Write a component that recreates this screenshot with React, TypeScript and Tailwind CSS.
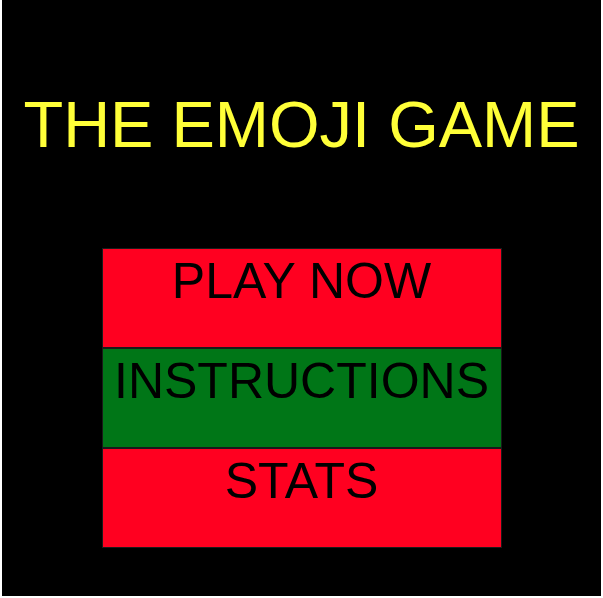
import React from 'react';

const menuItems = [
  { label: 'PLAY NOW', bg: 'bg-[#ff0020]' },
  { label: 'INSTRUCTIONS', bg: 'bg-[#007617]' },
  { label: 'STATS', bg: 'bg-[#ff0020]' },
];

const App: React.FC = () => {
  return (
    <div className="w-[603px] h-[598px] bg-white px-[2px] pb-[2px]" style={{ fontFamily: '"Liberation Sans", Arial, sans-serif' }}>
      <div className="h-full bg-black flex flex-col items-center">
        {/* Title */}
        <h1 className="mt-[88px] h-[75px] text-[65px] leading-[1.15] text-[#ffff38] whitespace-nowrap">
          THE EMOJI GAME
        </h1>

        {/* Menu */}
        <div className="mt-[85px] w-[400px] flex flex-col">
          {menuItems.map(item => (
            <button
              key={item.label}
              className={`${item.bg} h-[100px] border border-[#1a1a1a] pt-[4px] flex justify-center items-start text-[50px] leading-[1.15] text-black`}
            >
              {item.label}
            </button>
          ))}
        </div>
      </div>
    </div>
  );
};

export default App;
